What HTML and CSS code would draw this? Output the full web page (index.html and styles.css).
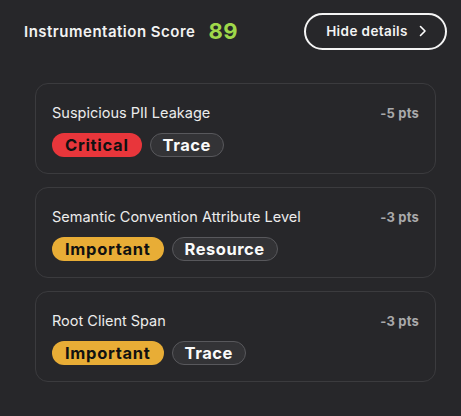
FILE: index.html
```html
<!DOCTYPE html>
<html>
<head>
<meta charset="utf-8">
<link rel="stylesheet" href="styles.css">
</head>
<body>
<div class="panel">
  <header class="header">
    <div class="score">
      <span class="score-label">Instrumentation Score</span>
      <span class="score-value">89</span>
    </div>
    <button class="toggle">Hide details
      <svg class="chev" width="8" height="12" viewBox="0 0 8 12"><path d="M1.5 1.5 L6 6 L1.5 10.5" fill="none" stroke="#fff" stroke-width="1.6" stroke-linecap="round" stroke-linejoin="round"/></svg>
    </button>
  </header>
  <div class="cards">
    <div class="card">
      <div class="card-top">
        <span class="title">Suspicious PII Leakage</span>
        <span class="pts">-5 pts</span>
      </div>
      <div class="tags">
        <span class="tag critical">Critical</span>
        <span class="tag scope">Trace</span>
      </div>
    </div>
    <div class="card">
      <div class="card-top">
        <span class="title">Semantic Convention Attribute Level</span>
        <span class="pts">-3 pts</span>
      </div>
      <div class="tags">
        <span class="tag important">Important</span>
        <span class="tag scope">Resource</span>
      </div>
    </div>
    <div class="card">
      <div class="card-top">
        <span class="title">Root Client Span</span>
        <span class="pts">-3 pts</span>
      </div>
      <div class="tags">
        <span class="tag important">Important</span>
        <span class="tag scope">Trace</span>
      </div>
    </div>
  </div>
</div>
</body>
</html>
```
FILE: styles.css
```css
html, body {
  margin: 0;
  padding: 0;
  background: #27272a;
}
body {
  width: 461px;
  height: 416px;
  overflow: hidden;
  font-family: Inter, "DejaVu Sans", sans-serif;
  color: #f2f2f2;
}
.panel {
  padding: 13px 14px 0 24px;
}
.header {
  display: flex;
  align-items: center;
  justify-content: space-between;
  height: 36px;
}
.score {
  display: flex;
  align-items: center;
  gap: 13px;
}
.score-label {
  font-size: 15px;
  font-weight: 600;
  letter-spacing: 0.5px;
}
.score-value {
  font-size: 22px;
  font-weight: 700;
  color: #9fd84a;
  letter-spacing: 0.5px;
}
.toggle {
  box-sizing: border-box;
  height: 37px;
  width: 143px;
  border: 2px solid #f4f4f4;
  border-radius: 19px;
  background: transparent;
  color: #f4f4f4;
  font-family: inherit;
  font-size: 13.5px;
  font-weight: 600;
  letter-spacing: 0.4px;
  display: flex;
  align-items: center;
  justify-content: center;
  gap: 11px;
  padding: 0 0 0 2px;
}
.chev {
  display: block;
}
.cards {
  margin-top: 34px;
  margin-left: 11px;
  width: 401px;
  display: flex;
  flex-direction: column;
  gap: 13px;
}
.card {
  box-sizing: border-box;
  height: 91px;
  border: 1px solid #3b3b3e;
  border-radius: 13px;
  padding: 20px 16px 0 16px;
}
.card-top {
  display: flex;
  justify-content: space-between;
  align-items: baseline;
}
.title {
  font-size: 14.5px;
  font-weight: 400;
  color: #ececec;
}
.pts {
  font-size: 13px;
  font-weight: 700;
  color: #a9a9ab;
  letter-spacing: 0.2px;
}
.tags {
  display: flex;
  gap: 8px;
  margin-top: 12px;
}
.tag {
  box-sizing: border-box;
  height: 24px;
  border-radius: 12px;
  padding: 0 13px;
  font-size: 16.5px;
  font-weight: 700;
  letter-spacing: 0.7px;
  display: flex;
  align-items: center;
}
.scope {
  background: #333336;
  border: 1px solid #58585c;
  color: #fafafa;
  padding: 0 12px;
  letter-spacing: 0.5px;
}
.critical {
  background: #e8363b;
  color: #111;
}
.important {
  background: #e8ad36;
  color: #111;
}
```
